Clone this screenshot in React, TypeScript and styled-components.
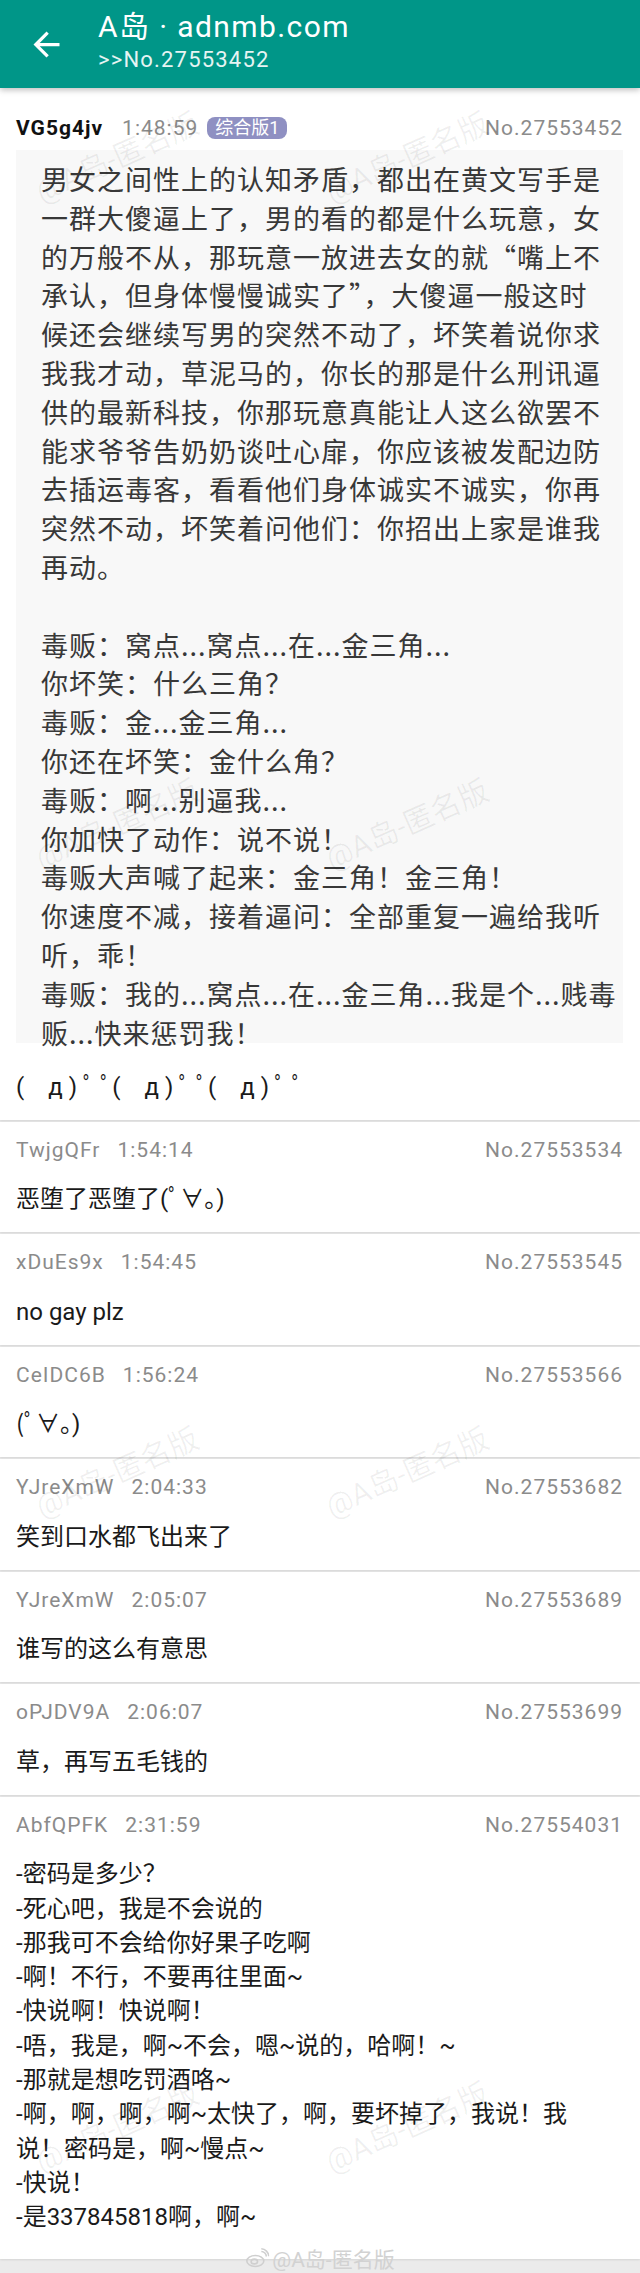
import React from "react";
import styled, { createGlobalStyle } from "styled-components";

const GlobalStyle = createGlobalStyle`
  html, body { margin: 0; padding: 0; background: #ffffff; }
  body {
    font-family: Roboto, "Noto Sans CJK SC", sans-serif;
    -webkit-font-smoothing: antialiased;
  }
  #root { width: 640px; }
`;

const Page = styled.div`
  position: relative;
  width: 640px;
  min-height: 2273px;
  background: #ebebeb;
  overflow: hidden;
`;

const AppBar = styled.header`
  position: relative;
  z-index: 2;
  height: 88px;
  background: #009688;
  box-shadow: 0 2px 6px rgba(0, 0, 0, 0.26);
  display: flex;
  align-items: flex-start;
`;

const BackButton = styled.div`
  width: 39px;
  height: 39px;
  margin: 24.5px 0 0 26.5px;
  color: #ffffff;
  display: flex;
`;

const TitleBlock = styled.div`
  display: flex;
  flex-direction: column;
  margin-left: 32.5px;
  padding-top: 10px;
  gap: 2.5px;
`;

const Title = styled.div`
  font-family: Roboto, "Noto Sans CJK SC", sans-serif;
  font-size: 30px;
  line-height: 34px;
  letter-spacing: 1.4px;
  color: #ffffff;
  white-space: nowrap;
`;

const SubTitle = styled.div`
  font-family: Roboto, sans-serif;
  font-size: 22px;
  line-height: 26px;
  letter-spacing: 1.2px;
  color: #e6f4f3;
`;

const List = styled.main`
  display: flex;
  flex-direction: column;
`;

const Card = styled.article<{ $top?: number; $bottom?: number }>`
  background: #ffffff;
  padding: ${(p) => p.$top ?? 13}px 17px ${(p) => p.$bottom ?? 15.8}px 16px;
  margin-bottom: 2px;
  box-shadow: 0 1px 2px rgba(0, 0, 0, 0.1);
`;

const Meta = styled.div`
  display: flex;
  align-items: center;
  height: 30px;
  font-family: Roboto, "Noto Sans CJK SC", sans-serif;
  font-size: 21px;
  letter-spacing: 1px;
  color: #8b8b8b;
  white-space: nowrap;
`;

const Uid = styled.span<{ $po?: boolean }>`
  color: ${(p) => (p.$po ? "#111111" : "#8b8b8b")};
  font-weight: ${(p) => (p.$po ? 700 : 400)};
`;

const Time = styled.span<{ $po?: boolean }>`
  margin-left: ${(p) => (p.$po ? 19 : 17)}px;
`;

const Badge = styled.span`
  margin-left: 9px;
  height: 22px;
  padding: 0 8px;
  border-radius: 8px;
  background: #8f90c2;
  color: #ffffff;
  font-size: 18px;
  letter-spacing: 0;
  line-height: 22px;
  display: inline-flex;
  align-items: center;
`;

const PostNo = styled.span`
  margin-left: auto;
`;

const Content = styled.div`
  margin-top: 17.4px;
  font-family: Roboto, "Noto Sans CJK SC", sans-serif;
  font-size: 24px;
  line-height: 34.3px;
  color: #1a1a1a;
  white-space: pre-wrap;
`;

const Kaomoji = styled(Content)`
  margin-top: 27px;
  line-height: 35px;
`;

const ImageBlock = styled.div`
  box-sizing: border-box;
  margin-top: 7px;
  height: 893px;
  padding: 10px 0 0 25px;
  background: #f8f8f8;
  font-family: "Noto Sans CJK SC", sans-serif;
  font-size: 27px;
  letter-spacing: 1px;
  line-height: 38.8px;
  color: #383838;
`;

const ImageLine = styled.div`
  white-space: pre;
`;

const Watermark = styled.span<{ $x: number; $y: number }>`
  position: absolute;
  left: ${(p) => p.$x}px;
  top: ${(p) => p.$y}px;
  z-index: 3;
  transform: translate(-50%, -50%) rotate(-24deg);
  font-family: Roboto, "Noto Sans CJK SC", sans-serif;
  font-size: 30px;
  color: rgba(0, 0, 0, 0.06);
  white-space: nowrap;
  pointer-events: none;
`;

const WeiboMark = styled.div`
  position: absolute;
  left: 50%;
  top: 2258px;
  z-index: 3;
  transform: translate(-50%, -50%);
  display: flex;
  align-items: center;
  gap: 3px;
  font-family: Roboto, "Noto Sans CJK SC", sans-serif;
  font-size: 21px;
  color: #d2d2d2;
  white-space: nowrap;
  pointer-events: none;
`;

type Post = {
  uid: string;
  time: string;
  no: string;
  po?: boolean;
  badge?: string;
  image?: string[];
  text: string;
};

const imageLines = [
  "男女之间性上的认知矛盾，都出在黄文写手是",
  "一群大傻逼上了，男的看的都是什么玩意，女",
  "的万般不从，那玩意一放进去女的就“嘴上不",
  "承认，但身体慢慢诚实了”，大傻逼一般这时",
  "候还会继续写男的突然不动了，坏笑着说你求",
  "我我才动，草泥马的，你长的那是什么刑讯逼",
  "供的最新科技，你那玩意真能让人这么欲罢不",
  "能求爷爷告奶奶谈吐心扉，你应该被发配边防",
  "去插运毒客，看看他们身体诚实不诚实，你再",
  "突然不动，坏笑着问他们：你招出上家是谁我",
  "再动。",
  "",
  "毒贩：窝点...窝点...在...金三角...",
  "你坏笑：什么三角？",
  "毒贩：金...金三角...",
  "你还在坏笑：金什么角？",
  "毒贩：啊...别逼我...",
  "你加快了动作：说不说！",
  "毒贩大声喊了起来：金三角！金三角！",
  "你速度不减，接着逼问：全部重复一遍给我听",
  "听，乖！",
  "毒贩：我的...窝点...在...金三角...我是个...贱毒",
  "贩...快来惩罚我！",
];

const posts: Post[] = [
  {
    uid: "VG5g4jv",
    time: "1:48:59",
    no: "No.27553452",
    po: true,
    badge: "综合版1",
    image: imageLines,
    text: "(　д ) ﾟ ﾟ(　д ) ﾟ ﾟ(　д ) ﾟ ﾟ",
  },
  { uid: "TwjgQFr", time: "1:54:14", no: "No.27553534", text: "恶堕了恶堕了(ﾟ∀。)" },
  { uid: "xDuEs9x", time: "1:54:45", no: "No.27553545", text: "no gay plz" },
  { uid: "CeIDC6B", time: "1:56:24", no: "No.27553566", text: "(ﾟ∀。)" },
  { uid: "YJreXmW", time: "2:04:33", no: "No.27553682", text: "笑到口水都飞出来了" },
  { uid: "YJreXmW", time: "2:05:07", no: "No.27553689", text: "谁写的这么有意思" },
  { uid: "oPJDV9A", time: "2:06:07", no: "No.27553699", text: "草，再写五毛钱的" },
  {
    uid: "AbfQPFK",
    time: "2:31:59",
    no: "No.27554031",
    text: [
      "-密码是多少？",
      "-死心吧，我是不会说的",
      "-那我可不会给你好果子吃啊",
      "-啊！不行，不要再往里面~",
      "-快说啊！快说啊！",
      "-唔，我是，啊~不会，嗯~说的，哈啊！~",
      "-那就是想吃罚酒咯~",
      "-啊，啊，啊，啊~太快了，啊，要坏掉了，我说！我\n说！密码是，啊~慢点~",
      "-快说！",
      "-是337845818啊，啊~",
    ].join("\n"),
  },
];

const watermarkSpots = [
  [116, 155], [406, 155],
  [116, 822], [406, 822],
  [116, 1470], [406, 1470],
  [116, 2125], [406, 2125],
];

const ArrowBack = () => (
  <svg width="39" height="39" viewBox="0 0 24 24" fill="currentColor">
    <path d="M20 11H7.83l5.59-5.59L12 4l-8 8 8 8 1.41-1.41L7.83 13H20v-2z" />
  </svg>
);

const WeiboLogo = () => (
  <svg width="24" height="20" viewBox="0 0 24 20" fill="none" stroke="#cfcfcf" strokeWidth="1.6">
    <ellipse cx="10" cy="13" rx="8.5" ry="5.5" />
    <ellipse cx="9" cy="13.5" rx="3.2" ry="2.4" />
    <path d="M16 3.5a5 5 0 0 1 5 5" />
    <path d="M16 0.8a8 8 0 0 1 7.5 7.5" />
  </svg>
);

const PostCard = ({ post, index, last }: { post: Post; index: number; last: boolean }) => (
  <Card $top={index === 0 ? 25 : undefined} $bottom={last ? 24 : index === 0 ? 15 : undefined}>
    <Meta>
      <Uid $po={post.po}>{post.uid}</Uid>
      <Time $po={post.po}>{post.time}</Time>
      {post.badge && <Badge>{post.badge}</Badge>}
      <PostNo>{post.no}</PostNo>
    </Meta>
    {post.image && (
      <ImageBlock>
        {post.image.map((line, i) => (
          <ImageLine key={i}>{line || "\u00a0"}</ImageLine>
        ))}
      </ImageBlock>
    )}
    {post.image ? <Kaomoji>{post.text}</Kaomoji> : <Content>{post.text}</Content>}
  </Card>
);

export default function App() {
  return (
    <>
      <GlobalStyle />
      <Page>
        <AppBar>
          <BackButton>
            <ArrowBack />
          </BackButton>
          <TitleBlock>
            <Title>A岛 · adnmb.com</Title>
            <SubTitle>&gt;&gt;No.27553452</SubTitle>
          </TitleBlock>
        </AppBar>
        <List>
          {posts.map((post, i) => (
            <PostCard key={post.no} post={post} index={i} last={i === posts.length - 1} />
          ))}
        </List>
        {watermarkSpots.map(([x, y], i) => (
          <Watermark key={i} $x={x} $y={y}>
            @A岛-匿名版
          </Watermark>
        ))}
        <WeiboMark>
          <WeiboLogo />
          @A岛-匿名版
        </WeiboMark>
      </Page>
    </>
  );
}
